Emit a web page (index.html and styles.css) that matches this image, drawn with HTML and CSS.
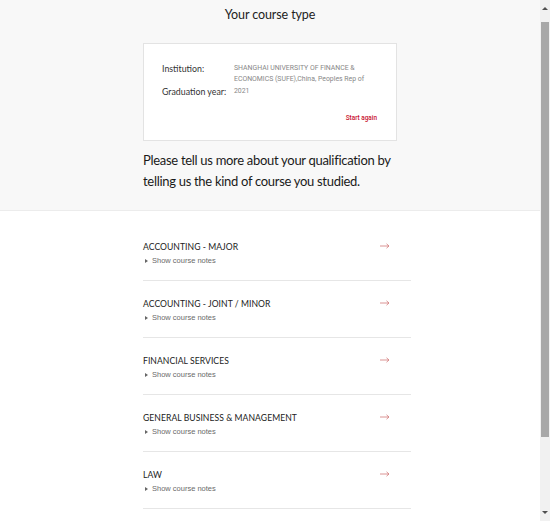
FILE: index.html
```html
<!DOCTYPE html>
<html lang="en">
<head>
<meta charset="utf-8">
<title>Your course type</title>
<link rel="stylesheet" href="styles.css">
</head>
<body>
<div class="frame">
  <main class="page">
    <section class="intro">
      <h1 class="title">Your course type</h1>
      <div class="card">
        <dl class="facts">
          <dt>Institution:</dt>
          <dd>SHANGHAI UNIVERSITY OF FINANCE &amp; ECONOMICS (SUFE),China, Peoples Rep of</dd>
          <dt>Graduation year:</dt>
          <dd>2021</dd>
        </dl>
        <div class="card-actions"><a class="restart" href="#">Start again</a></div>
      </div>
      <p class="lead">Please tell us more about your qualification by telling us the kind of course you studied.</p>
    </section>
    <section class="courses">
      <ul class="course-list">
        <li class="course">
          <div class="course-text">
            <div class="course-name">ACCOUNTING - MAJOR</div>
            <div class="notes"><span class="caret"></span>Show course notes</div>
          </div>
          <svg class="arrow" viewBox="0 0 10 6" width="10" height="6"><path d="M0 3H9M6.5 0.8L9 3L6.5 5.2" fill="none" stroke="#d27a7a" stroke-width="0.8"/></svg>
        </li>
        <li class="course">
          <div class="course-text">
            <div class="course-name">ACCOUNTING - JOINT / MINOR</div>
            <div class="notes"><span class="caret"></span>Show course notes</div>
          </div>
          <svg class="arrow" viewBox="0 0 10 6" width="10" height="6"><path d="M0 3H9M6.5 0.8L9 3L6.5 5.2" fill="none" stroke="#d27a7a" stroke-width="0.8"/></svg>
        </li>
        <li class="course">
          <div class="course-text">
            <div class="course-name">FINANCIAL SERVICES</div>
            <div class="notes"><span class="caret"></span>Show course notes</div>
          </div>
          <svg class="arrow" viewBox="0 0 10 6" width="10" height="6"><path d="M0 3H9M6.5 0.8L9 3L6.5 5.2" fill="none" stroke="#d27a7a" stroke-width="0.8"/></svg>
        </li>
        <li class="course">
          <div class="course-text">
            <div class="course-name">GENERAL BUSINESS &amp; MANAGEMENT</div>
            <div class="notes"><span class="caret"></span>Show course notes</div>
          </div>
          <svg class="arrow" viewBox="0 0 10 6" width="10" height="6"><path d="M0 3H9M6.5 0.8L9 3L6.5 5.2" fill="none" stroke="#d27a7a" stroke-width="0.8"/></svg>
        </li>
        <li class="course">
          <div class="course-text">
            <div class="course-name">LAW</div>
            <div class="notes"><span class="caret"></span>Show course notes</div>
          </div>
          <svg class="arrow" viewBox="0 0 10 6" width="10" height="6"><path d="M0 3H9M6.5 0.8L9 3L6.5 5.2" fill="none" stroke="#d27a7a" stroke-width="0.8"/></svg>
        </li>
      </ul>
    </section>
  </main>
  <div class="scrollbar" aria-hidden="true">
    <div class="sb-btn sb-up"></div>
    <div class="sb-track"><div class="sb-thumb"></div></div>
    <div class="sb-btn sb-down"></div>
  </div>
</div>
</body>
</html>
```
FILE: styles.css
```css
* { box-sizing: border-box; }
html, body { margin: 0; padding: 0; height: 100%; overflow: hidden; }
body { font-family: Lato, "Open Sans", sans-serif; color: #222; background: #fff; }

.frame { display: flex; height: 521px; width: 550px; }
.page { flex: 1; min-width: 0; overflow: hidden; }

.intro {
  background: #f8f8f8;
  border-bottom: 1px solid #ececec;
  padding: 8px 0 16px 143px;
  height: 211px;
}
.title {
  margin: 0 0 21px -143px;
  text-align: center;
  font-size: 12.5px;
  font-weight: 400;
  letter-spacing: -0.1px;
  line-height: 14px;
  color: #222;
}
.card {
  width: 254px;
  height: 98px;
  background: #fff;
  border: 1px solid #e3e3e3;
  padding: 19px 19px 0 18px;
}
.facts {
  display: grid;
  grid-template-columns: 72px 1fr;
  margin: 0;
  font-size: 8.8px;
}
.facts dt { color: #333; line-height: 11px; }
.facts dt:nth-of-type(2) { padding-top: 1px; }
.facts dd {
  margin: 0;
  font-family: Roboto, "Liberation Sans", sans-serif;
  font-size: 6.9px;
  line-height: 11px;
  color: #888;
}
.facts dd:nth-of-type(2) { padding-top: 1px; }
.card-actions { display: flex; justify-content: flex-end; margin-top: 17px; }
.restart {
  font-family: Roboto, "Liberation Sans", sans-serif;
  font-size: 6.4px;
  font-weight: 500;
  color: #c8102e;
  text-decoration: none;
}
.lead {
  margin: 9px 0 0;
  width: 258px;
  font-size: 13px;
  letter-spacing: -0.3px;
  line-height: 21px;
  color: #1a1a1a;
}

.courses { padding: 13px 0 0 143px; }
.course-list { list-style: none; margin: 0; padding: 0; width: 268px; }
.course {
  display: flex;
  align-items: flex-start;
  justify-content: space-between;
  padding: 17px 21px 13px 0;
  border-bottom: 1px solid #e6e6e6;
}
.course-name {
  font-size: 8.6px;
  line-height: 12px;
  letter-spacing: 0.05px;
  color: #222;
}
.notes {
  display: flex;
  align-items: center;
  margin-top: 2px;
  font-family: "Liberation Sans", Arial, sans-serif;
  font-size: 7.5px;
  line-height: 12px;
  color: #6a6a6a;
}
.caret {
  width: 0; height: 0;
  border-top: 2.5px solid transparent;
  border-bottom: 2.5px solid transparent;
  border-left: 3px solid #666;
  margin: 0 4px 0 2px;
}
.arrow { margin-top: 2px; }

.scrollbar {
  width: 10px;
  background: #f1f1f1;
  display: flex;
  flex-direction: column;
}
.sb-btn { height: 17px; display: flex; justify-content: center; align-items: center; }
.sb-up::before, .sb-down::before {
  content: "";
  width: 0; height: 0;
  border-left: 3px solid transparent;
  border-right: 3px solid transparent;
}
.sb-up::before { border-bottom: 3px solid #505050; }
.sb-down::before { border-top: 3px solid #505050; }
.sb-track { flex: 1; padding: 5px 1px 0; }
.sb-thumb { height: 415px; background: #a8a8a8; }
```
